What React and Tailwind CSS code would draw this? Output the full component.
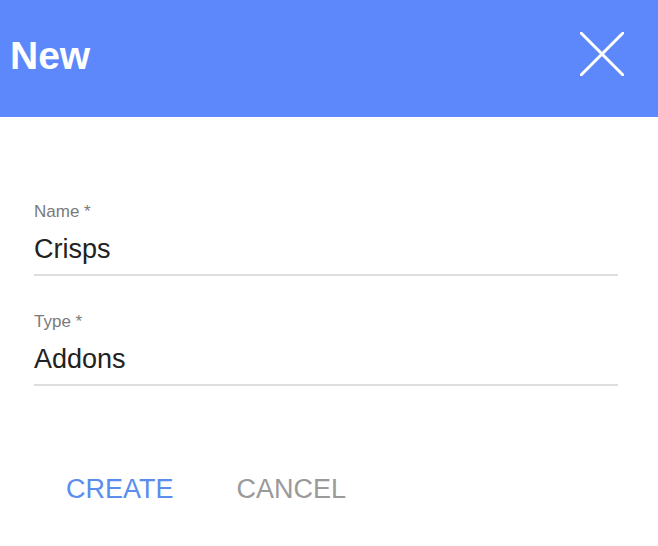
export default function App() {
  return (
    <div className="w-[658px] h-[546px] bg-white font-['Liberation_Sans',Arial,sans-serif]">
      {/* Header */}
      <div className="h-[117px] bg-[#5c88fb] flex items-center justify-between pl-[10px] pr-[34px]">
        <h1 className="text-white text-[39px] font-bold leading-none -mt-[6px]">New</h1>
        <button className="w-[44px] h-[44px] -mt-[10px]">
          <svg width="44" height="44" viewBox="0 0 44 44" stroke="white" strokeWidth="3" strokeLinecap="round">
            <line x1="1" y1="1" x2="43" y2="43" />
            <line x1="43" y1="1" x2="1" y2="43" />
          </svg>
        </button>
      </div>

      {/* Form */}
      <div className="pl-[34px] pr-[40px] pt-[85px]">
        <div className="border-b-2 border-[#dedede] pb-[10px]">
          <div className="text-[17px] leading-[20px] text-[#7a7a7a]">Name *</div>
          <div className="text-[27px] leading-[30px] text-[#222] mt-[12px]">Crisps</div>
        </div>
        <div className="border-b-2 border-[#dedede] pb-[10px] mt-[36px]">
          <div className="text-[17px] leading-[20px] text-[#7a7a7a]">Type *</div>
          <div className="text-[27px] leading-[30px] text-[#222] mt-[12px]">Addons</div>
        </div>
      </div>

      {/* Actions */}
      <div className="flex gap-[63px] pl-[66px] pt-[90px]">
        <button className="text-[27px] leading-none text-[#5b8def] uppercase">Create</button>
        <button className="text-[27px] leading-none text-[#9a9a9a] uppercase">Cancel</button>
      </div>
    </div>
  );
}
